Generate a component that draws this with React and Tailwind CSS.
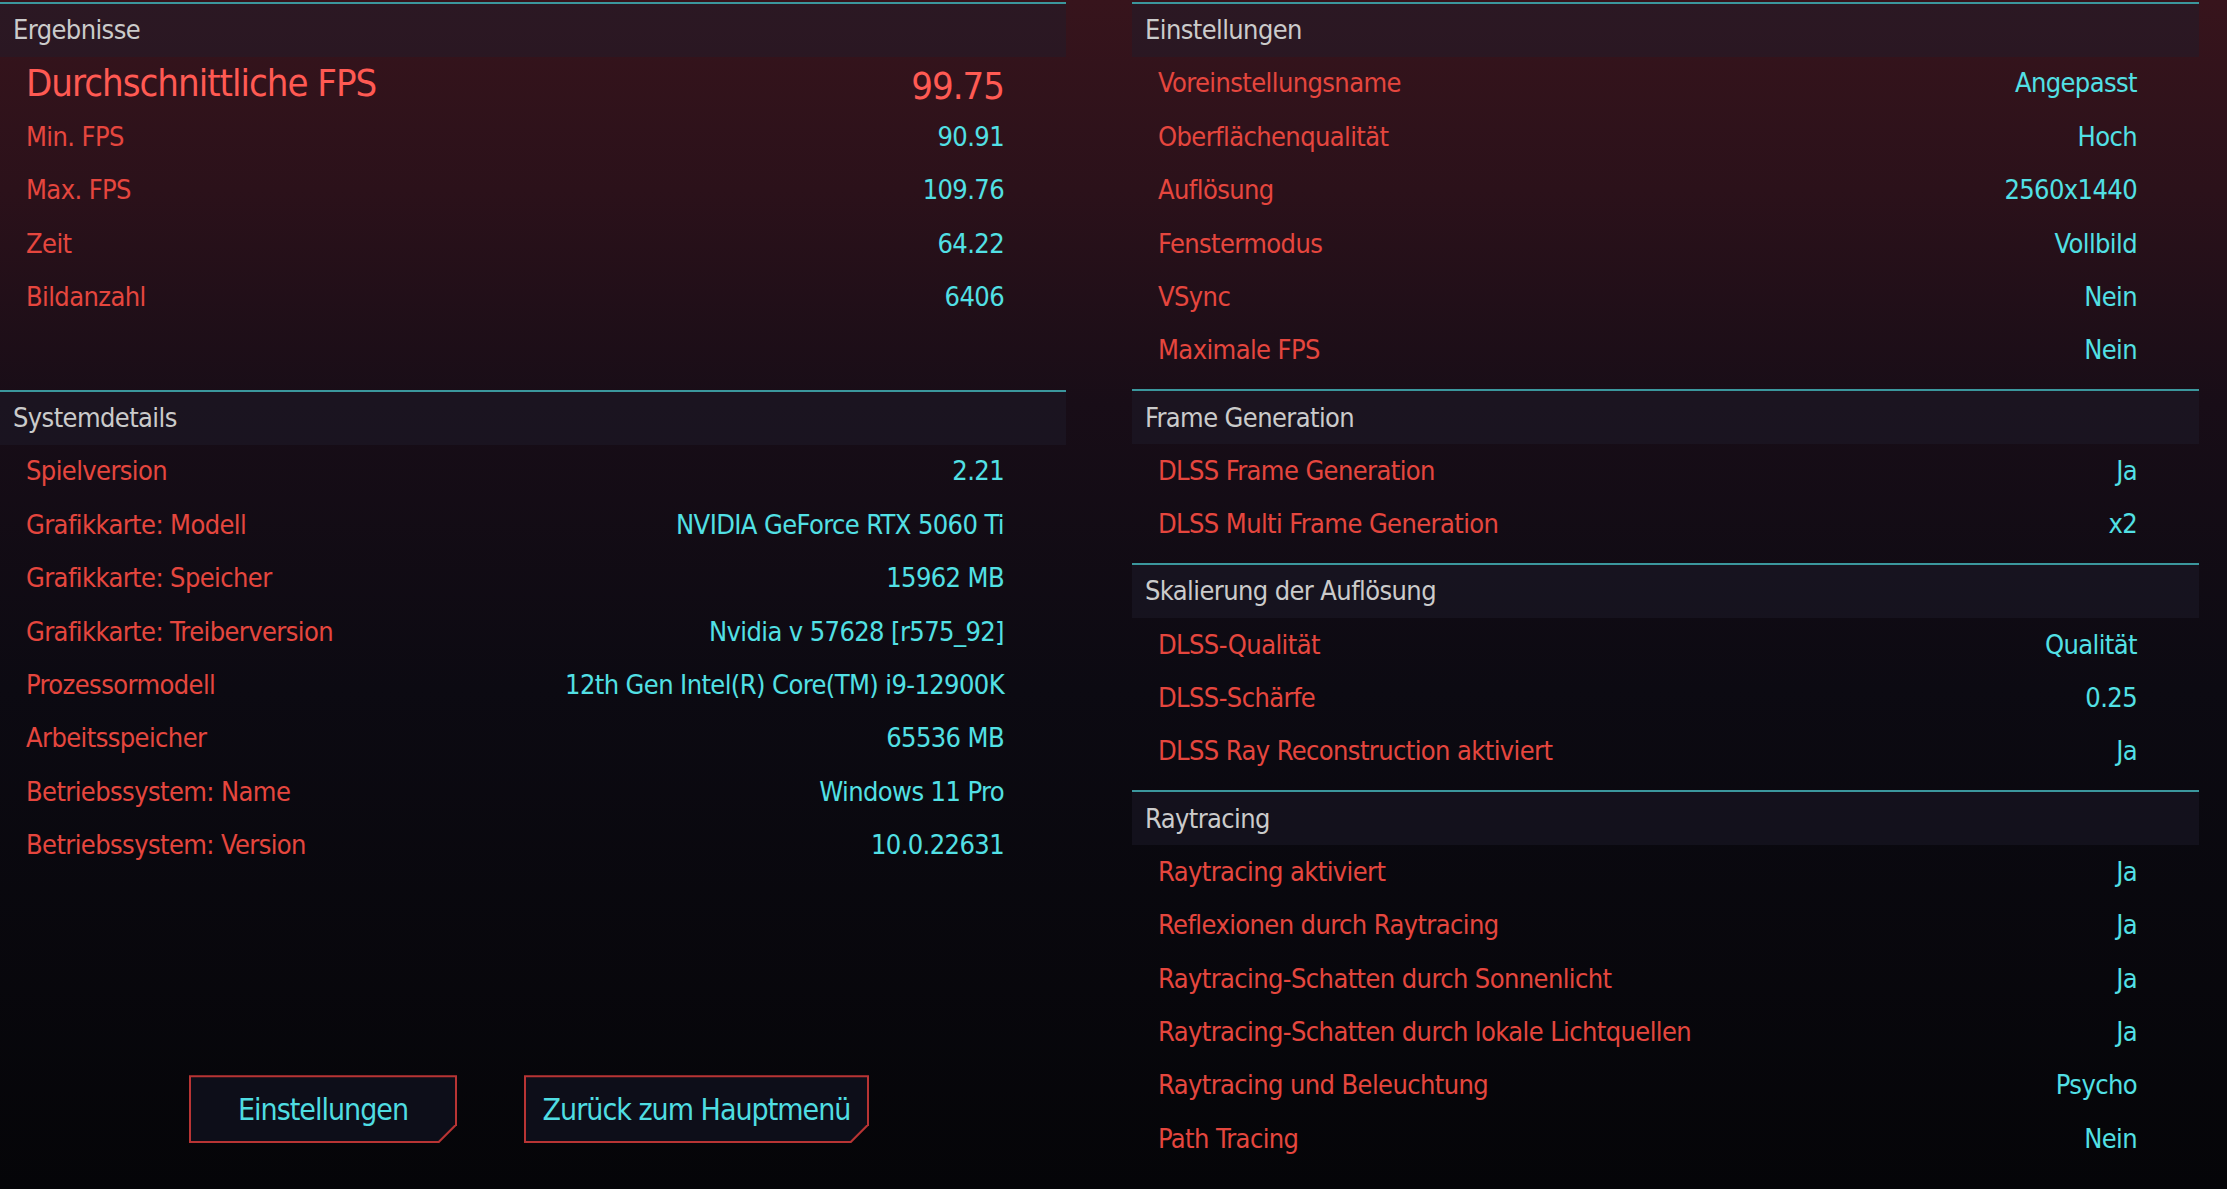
import React from "react";

const font = {
  fontFamily: '"Liberation Sans Narrow", "DejaVu Sans Condensed", "Liberation Sans", sans-serif',
};

const ergebnisse = [
  ["Min. FPS", "90.91"],
  ["Max. FPS", "109.76"],
  ["Zeit", "64.22"],
  ["Bildanzahl", "6406"],
];

const system = [
  ["Spielversion", "2.21"],
  ["Grafikkarte: Modell", "NVIDIA GeForce RTX 5060 Ti"],
  ["Grafikkarte: Speicher", "15962 MB"],
  ["Grafikkarte: Treiberversion", "Nvidia v 57628 [r575_92]"],
  ["Prozessormodell", "12th Gen Intel(R) Core(TM) i9-12900K"],
  ["Arbeitsspeicher", "65536 MB"],
  ["Betriebssystem: Name", "Windows 11 Pro"],
  ["Betriebssystem: Version", "10.0.22631"],
];

const settings = [
  {
    title: "Einstellungen",
    rows: [
      ["Voreinstellungsname", "Angepasst"],
      ["Oberflächenqualität", "Hoch"],
      ["Auflösung", "2560x1440"],
      ["Fenstermodus", "Vollbild"],
      ["VSync", "Nein"],
      ["Maximale FPS", "Nein"],
    ],
  },
  {
    title: "Frame Generation",
    rows: [
      ["DLSS Frame Generation", "Ja"],
      ["DLSS Multi Frame Generation", "x2"],
    ],
  },
  {
    title: "Skalierung der Auflösung",
    rows: [
      ["DLSS-Qualität", "Qualität"],
      ["DLSS-Schärfe", "0.25"],
      ["DLSS Ray Reconstruction aktiviert", "Ja"],
    ],
  },
  {
    title: "Raytracing",
    rows: [
      ["Raytracing aktiviert", "Ja"],
      ["Reflexionen durch Raytracing", "Ja"],
      ["Raytracing-Schatten durch Sonnenlicht", "Ja"],
      ["Raytracing-Schatten durch lokale Lichtquellen", "Ja"],
      ["Raytracing und Beleuchtung", "Psycho"],
      ["Path Tracing", "Nein"],
    ],
  },
];

function Header({ title }) {
  return (
    <div className="border-t-2 border-[#3b979d]">
      <div className="h-[53px] flex items-center pl-[13px] bg-[rgba(30,28,45,0.45)] text-[27px] tracking-[-0.6px] text-[#cbcbcb]">
        {title}
      </div>
    </div>
  );
}

function Row({ label, value }) {
  return (
    <div className="h-[53.4px] flex items-center justify-between pl-[26px] pr-[62px] text-[27px] tracking-[-0.6px]">
      <span className="text-[#e5463e]">{label}</span>
      <span className="text-[#52e0e5]">{value}</span>
    </div>
  );
}

function CutButton({ children, width }) {
  return (
    <div
      className={`${width} h-[68px] bg-[#b83434] [clip-path:polygon(0_0,100%_0,100%_calc(100%_-_18px),calc(100%_-_18px)_100%,0_100%)]`}
    >
      <div className="absolute inset-[2px] bg-[#0d0e19] flex items-center justify-center text-[30px] tracking-[-1px] text-[#4fdde2] [clip-path:polygon(0_0,100%_0,100%_calc(100%_-_17px),calc(100%_-_17px)_100%,0_100%)]">
        {children}
      </div>
    </div>
  );
}

export default function App() {
  return (
    <div
      style={font}
      className="w-[2227px] h-[1189px] overflow-hidden flex gap-[66px] pt-[2px] bg-[linear-gradient(to_bottom,#37141c_0%,#2b111a_16%,#180d17_34%,#0c0a12_58%,#050508_100%)]"
    >
      {/* left column */}
      <div className="w-[1066px] flex flex-col">
        <div className="h-[388px]">
          <Header title="Ergebnisse" />
          <div className="h-[53.4px] flex items-center justify-between pl-[26px] pr-[62px] text-[38px] tracking-[-1px] text-[#ff5a53]">
            <span>Durchschnittliche FPS</span>
            <span className="pt-[6px]">99.75</span>
          </div>
          {ergebnisse.map(([l, v]) => (
            <Row key={l} label={l} value={v} />
          ))}
        </div>
        <div>
          <Header title="Systemdetails" />
          {system.map(([l, v]) => (
            <Row key={l} label={l} value={v} />
          ))}
        </div>
        <div className="flex gap-[67px] pl-[189px] mt-[203px]">
          <div className="relative">
            <CutButton width="w-[268px]">Einstellungen</CutButton>
          </div>
          <div className="relative">
            <CutButton width="w-[345px]">Zurück zum Hauptmenü</CutButton>
          </div>
        </div>
      </div>

      {/* right column */}
      <div className="w-[1067px] flex flex-col">
        {settings.map((s) => (
          <div key={s.title} className="pb-[12px]">
            <Header title={s.title} />
            {s.rows.map(([l, v]) => (
              <Row key={l} label={l} value={v} />
            ))}
          </div>
        ))}
      </div>
    </div>
  );
}
